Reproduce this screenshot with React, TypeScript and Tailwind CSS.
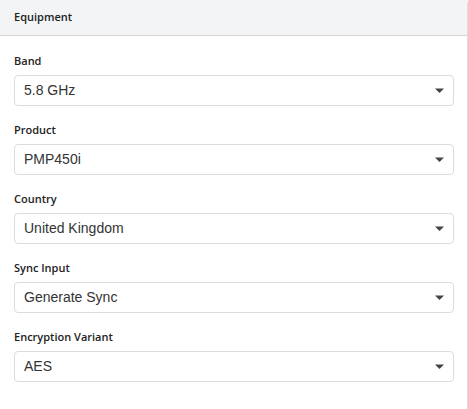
const fields = [
    { label: 'Band', value: '5.8 GHz' },
    { label: 'Product', value: 'PMP450i' },
    { label: 'Country', value: 'United Kingdom' },
    { label: 'Sync Input', value: 'Generate Sync' },
    { label: 'Encryption Variant', value: 'AES' },
];

const SelectBox = ({ value }: { value: string }) => {
    return (
        <div className="flex h-[31px] items-center justify-between rounded-[4px] border border-[#dcdcdc] bg-white pl-[9px] pr-[9px]">
            <span className="font-['Liberation_Sans',Arial,sans-serif] text-[14px] text-[#333]">
                {value}
            </span>
            <svg width="9" height="5" viewBox="0 0 9 5">
                <path d="M0 0.5 H9 L4.5 5 Z" fill="#444" />
            </svg>
        </div>
    );
};

export default function App() {
    return (
        <div className="h-[409px] w-[468px] bg-white font-['Open_Sans',sans-serif]">
            <div className="h-full w-[468px] rounded-tr-[4px] border-r border-[#dcdcdc]">
                {/* Header */}
                <div className="flex h-[36px] items-center border-b border-[#d6d6d6] bg-[#f3f4f6] px-[14px]">
                    <span className="text-[11px] font-semibold text-[#222]">
                        Equipment
                    </span>
                </div>

                {/* Fields */}
                <div className="flex flex-col gap-[16px] pl-[14px] pr-[13px] pt-[17px]">
                    {fields.map((f) => (
                        <div key={f.label} className="flex flex-col gap-[6px]">
                            <label className="text-[11px] font-semibold leading-[16px] text-[#222]">
                                {f.label}
                            </label>
                            <SelectBox value={f.value} />
                        </div>
                    ))}
                </div>
            </div>
        </div>
    );
}
